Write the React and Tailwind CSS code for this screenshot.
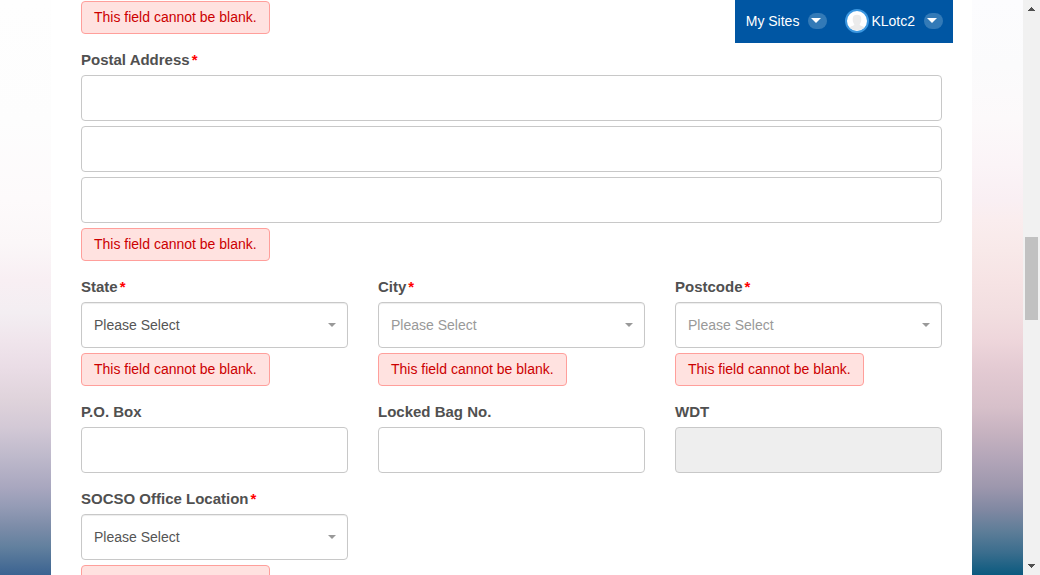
import React from "react";

function FieldError({ id }) {
  return (
    <p
      id={id}
      className="mt-[5px] w-fit rounded border border-[#ff9f9b] bg-[#ffe2e0] px-3 pt-[5px] pb-[6px] text-sm leading-5 text-[#cc0000]"
    >
      This field cannot be blank.
    </p>
  );
}

function FieldLabel({ htmlFor, required, children }) {
  return (
    <label
      htmlFor={htmlFor}
      className="mt-4 mb-[5px] block text-[15px] leading-5 font-bold text-[#505050]"
    >
      {children}
      {required && <span className="ml-0.5 text-[#ff0000]">*</span>}
    </label>
  );
}

function TextBox(props) {
  return (
    <input
      type="text"
      className="block h-[46px] w-full rounded border border-[#c8c8c8] bg-white px-3 text-sm text-[#505050] outline-none disabled:bg-[#eeeeee]"
      {...props}
    />
  );
}

function SelectField({ id, label, disabled }) {
  return (
    <div>
      <FieldLabel htmlFor={id} required>
        {label}
      </FieldLabel>
      <div className="relative">
        <select
          id={id}
          disabled={disabled}
          aria-describedby={id + "-error"}
          className="block h-[46px] w-full appearance-none rounded border border-[#c8c8c8] bg-white px-3 text-sm text-[#555555] opacity-100 shadow-[inset_0_1px_1px_rgba(0,0,0,0.075)] outline-none disabled:text-[#999999]"
        >
          <option>Please Select</option>
        </select>
        <svg
          viewBox="0 0 8 4"
          className="pointer-events-none absolute top-[21px] right-3 h-1 w-2 fill-[#999999]"
          aria-hidden="true"
        >
          <path d="M0 0H8L4 4Z" />
        </svg>
      </div>
      <FieldError id={id + "-error"} />
    </div>
  );
}

function TextField({ id, label, disabled }) {
  return (
    <div>
      <FieldLabel htmlFor={id}>{label}</FieldLabel>
      <TextBox id={id} disabled={disabled} />
    </div>
  );
}

function MenuCaret() {
  return (
    <span className="flex h-4 w-[19px] items-center justify-center rounded-full bg-[#337ab7] pr-1">
      <svg viewBox="0 0 10 5" className="h-[5px] w-[10px] fill-white" aria-hidden="true">
        <path d="M0 0H10L5 5Z" />
      </svg>
    </span>
  );
}

function UserBar() {
  return (
    <nav className="absolute top-0 right-[19px] flex h-[43px] items-center gap-[18px] bg-[#0056a3] pr-[10px] pb-0.5 pl-[11px] text-sm text-white">
      <button type="button" className="flex items-center gap-[9px]">
        My Sites
        <MenuCaret />
      </button>
      <button type="button" className="flex items-center gap-[9px]">
        <span className="flex items-center gap-[2px]">
          <svg viewBox="0 0 24 24" className="size-6" aria-hidden="true">
            <circle cx="12" cy="12" r="11" fill="#ffffff" stroke="#3b97e0" strokeWidth="2" />
            <path
              d="M4.500 18.500C6 16.800 9 17 9.400 15.500C7.800 13.500 7.300 10.500 8 8C8.800 5 15.200 5 16 8C16.700 10.500 16.200 13.500 14.600 15.500C15 17 18 16.800 19.500 18.500C15.500 22 8.500 22 4.500 18.500Z"
              fill="#ebebeb"
            />
          </svg>
          KLotc2
        </span>
        <MenuCaret />
      </button>
    </nav>
  );
}

function ScrollRail() {
  return (
    <div className="flex w-[17px] shrink-0 flex-col items-center bg-[#f1f1f1] py-[7px]" aria-hidden="true">
      <svg viewBox="0 0 7 4" className="h-1 w-[7px] fill-[#505050]">
        <path d="M3 0H4V1H5V2H6V3H7V4H0V3H1V2H2V1H3Z" />
      </svg>
      <div className="flex w-full flex-1 flex-col items-center">
        <div className="grow-[226]" />
        <div className="h-[83px] w-[13px] bg-[#c1c1c1]" />
        <div className="grow-[244]" />
      </div>
      <svg viewBox="0 0 7 4" className="h-1 w-[7px] fill-[#505050]">
        <path d="M0 0H7V1H6V2H5V3H4V4H3V3H2V2H1V1H0Z" />
      </svg>
    </div>
  );
}

export default function App() {
  return (
    <div className="flex h-screen overflow-hidden bg-white font-['Liberation_Sans',Arial,sans-serif]">
      <div className="grid min-w-0 flex-1 grid-cols-[51px_minmax(0,1fr)_51px]">
        <div className="bg-[linear-gradient(to_bottom,#fefefe_0px,#fdfdfd_120px,#fdfafb_200px,#fbf7f8_243px,#f8eff3_280px,#f3eef2_313px,#f0e5ec_340px,#eadde6_367px,#dfd3db_400px,#d3c9d6_427px,#beb9cb_457px,#a9a7bf_487px,#949bb5_507px,#7c8ca8_527px,#62809e_547px,#3b6391_575px)]" />
        <main className="relative h-screen overflow-hidden bg-white px-[30px]">
          <UserBar />
          <form className="-mt-1">
            <FieldError id="name-error" />
            <FieldLabel htmlFor="address-1" required>
              Postal Address
            </FieldLabel>
            <div className="grid gap-[5px]">
              <TextBox id="address-1" aria-describedby="address-error" />
              <TextBox aria-label="Postal Address line 2" />
              <TextBox aria-label="Postal Address line 3" />
            </div>
            <FieldError id="address-error" />
            <div className="grid grid-cols-3 gap-x-[30px]">
              <SelectField id="state" label="State" />
              <SelectField id="city" label="City" disabled />
              <SelectField id="postcode" label="Postcode" disabled />
              <TextField id="po-box" label="P.O. Box" />
              <TextField id="locked-bag" label="Locked Bag No." />
              <TextField id="wdt" label="WDT" disabled />
              <SelectField id="socso" label="SOCSO Office Location" />
            </div>
          </form>
        </main>
        <div className="bg-[linear-gradient(to_bottom,#fcfcfe_0px,#fbfbfc_65px,#fcf9fa_120px,#fbf4f7_165px,#f9eff3_200px,#faedee_220px,#f8e9e9_250px,#f6e3e4_283px,#f2dee0_313px,#eed6db_340px,#e4cbd3_367px,#d7c0ca_407px,#c6b2c0_433px,#b2a5b8_460px,#9d97ad_487px,#8088a2_510px,#5b7c97_533px,#3a6d8d_553px,#0b5a7f_575px)]" />
      </div>
      <ScrollRail />
    </div>
  );
}
